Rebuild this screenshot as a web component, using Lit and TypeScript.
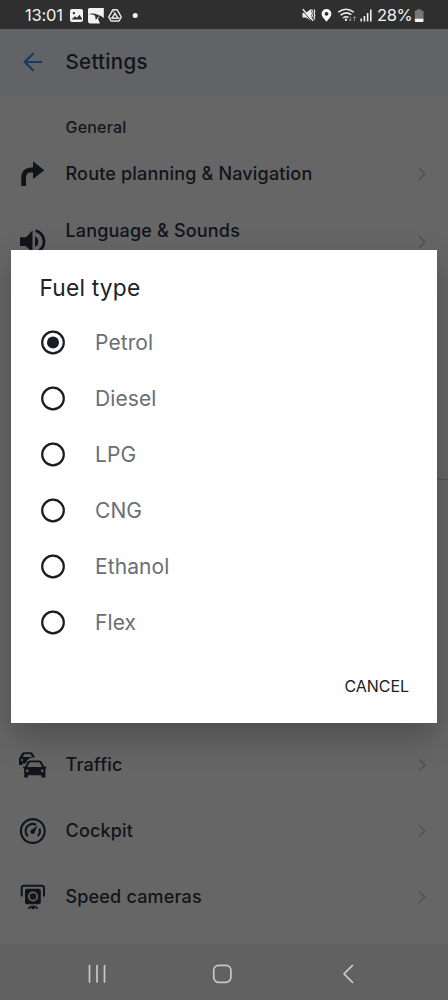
import { LitElement, html, css, svg } from "lit";
import { customElement, property } from "lit/decorators.js";

const icons: Record<string, unknown> = {
  route: svg`<path d="M3.2 27V19.5C3.2 12 7 8.6 13.5 8.6H15V2.2L26.4 11.2L15 20V13.6H13C9.5 13.6 8 15.5 8 19.5V27Z" fill="currentColor"/>`,
  sound: svg`<path d="M2 10.3H8L14.5 3.6V25.8L8 19H2Z" fill="currentColor"/><path d="M17 9.3Q20.3 11 20.3 14.7T17 20Z" fill="currentColor"/><path d="M17.6 3.6A11.3 11.3 0 0 1 17.6 25.5" fill="none" stroke="currentColor" stroke-width="2.8"/>`,
  traffic: svg`<path d="M1 15V8.3L3.8 3.7Q4.5 2.3 6 2.3H12.7Q14.2 2.3 15 3.7L17 7.3C13.5 7.3 10.7 8 9.2 10.6L7.7 13.4H4.5V15Z" fill="currentColor"/><path d="M4.8 6.9H14.2L12.7 4.4Q12.4 4 11.9 4H6.8Q6.3 4 6 4.4Z" fill="#646464"/><circle cx="4" cy="10" r="1.1" fill="#646464"/><path d="M6.2 27.5V19L5.2 17.8V16.5H7.2L9.3 12.2Q10.2 10.4 12 10.4H21.3Q23.1 10.4 24 12.2L26.1 16.5H28.2V17.8L27.4 19V27.5H23.5V25.2H10V27.5Z" fill="currentColor"/><path d="M9.3 16.9H24L22 13Q21.6 12.2 20.8 12.2H12.5Q11.7 12.2 11.3 13Z" fill="#646464"/><circle cx="9.3" cy="20.8" r="1.4" fill="#646464"/><circle cx="24.2" cy="20.8" r="1.4" fill="#646464"/>`,
  cockpit: svg`<g fill="none" stroke="currentColor" stroke-width="2.1"><circle cx="14.8" cy="15" r="11.9"/><path d="M9.9 20.1A7 7 0 0 1 18 8.8M21.4 12.5A7 7 0 0 1 19.7 20.1"/></g><circle cx="14.6" cy="15.7" r="2.2" fill="currentColor"/><path d="M13.1 14.5L19.7 9.3L16.3 17Z" fill="currentColor"/>`,
  camera: svg`<path d="M3.7 14.5V6Q3.7 3.8 6 3.8H23.7Q26 3.8 26 6V14.5" fill="none" stroke="currentColor" stroke-width="2"/><rect x="7" y="6.8" width="15.8" height="15.4" rx="2" fill="currentColor"/><circle cx="15" cy="14.5" r="4.2" fill="none" stroke="#646464" stroke-width="1.8"/><path d="M10.5 27Q11.5 24.6 13.6 24.6H16.5Q18.6 24.6 19.6 27M14 27L15 25L16.2 27" fill="none" stroke="currentColor" stroke-width="1.6"/>`,
};

@customElement("settings-row")
class SettingsRow extends LitElement {
  @property() icon = "";
  @property() label = "";
  @property({ type: Boolean }) detailed = false;
  static styles = css`
    :host { display: grid; grid-template-columns: 65.5px 1fr auto; align-items: center; height: 66px; flex: none; color: #11141b; }
    .icon { width: 30px; height: 30px; margin-left: 18px; display: block; }
    .label { font-size: 18px; font-weight: 500; line-height: 24px; letter-spacing: 0.18px; white-space: nowrap; }
    .detail { height: 22px; }
    .chevron { width: 10px; height: 14px; margin-right: 21px; display: block; }
  `;
  render() {
    return html`
      <svg class="icon" viewBox="0 0 30 30">${icons[this.icon]}</svg>
      <div><div class="label">${this.label}</div>${this.detailed ? html`<div class="detail"></div>` : ""}</div>
      <svg class="chevron" viewBox="0 0 10 14" fill="none" stroke="#505154" stroke-width="1.6"><path d="M2 1.2L7.8 7L2 12.8"/></svg>`;
  }
}

@customElement("fuel-option")
class FuelOption extends LitElement {
  @property() label = "";
  @property({ type: Boolean }) checked = false;
  static styles = css`
    :host { display: flex; align-items: center; height: 56px; gap: 29px; padding-left: 1px; font-size: 21px; letter-spacing: 0.1px; color: #6a6e77; }
    .radio { width: 26px; height: 26px; }
  `;
  render() {
    return html`<svg class="radio" viewBox="0 0 26 26"><circle cx="13" cy="12.5" r="10.8" fill="none" stroke="#191b27" stroke-width="2.2"/>${this.checked ? svg`<circle cx="13" cy="12.5" r="6" fill="#191b27"/>` : ""}</svg><span>${this.label}</span>`;
  }
}

@customElement("app-root")
class AppRoot extends LitElement {
  static styles = css`
    :host { display: block; position: relative; width: 448px; height: 1000px; overflow: hidden; background: #666; font-family: Inter, sans-serif; }
    .screen { display: flex; flex-direction: column; height: 1000px; }
    .status { height: 29px; background: #2f2f2f; color: #f2f2f2; display: flex; align-items: center; justify-content: space-between; font-size: 16.5px; box-sizing: border-box; padding: 0 23px 0 25px; flex: none; }
    .group { display: flex; align-items: center; height: 28px; }
    .clock { width: 43px; letter-spacing: -0.2px; white-space: nowrap; }
    .symbols { display: block; }
    .percent { width: 36px; letter-spacing: -0.4px; white-space: nowrap; }
    .bar { height: 66px; flex: none; background: #626367; display: flex; align-items: center; color: #11141b; }
    .back { width: 22px; height: 22px; margin-left: 22px; margin-right: 21.5px; }
    .title { font-size: 20.5px; font-weight: 500; letter-spacing: 0.3px; padding-bottom: 2px; }
    .section { height: 46px; flex: none; padding: 20px 0 0 65.5px; box-sizing: border-box; font-size: 16px; line-height: 25px; font-weight: 500; letter-spacing: 0.2px; color: #15171d; }
    .list { flex: 1; display: flex; flex-direction: column; min-height: 0; }
    .tall { height: 70px; }
    .covered { height: 455px; flex: none; box-sizing: border-box; padding: 202px 0 0 65px; }
    .divider { height: 1px; background: #555; }
    .nav { height: 56px; flex: none; background: #616161; }
    .dialog { position: absolute; left: 11px; top: 249.5px; width: 426px; height: 473.5px; box-sizing: border-box; background: #fff; padding: 24px 28px 0; display: flex; flex-direction: column; box-shadow: 0 14px 32px rgba(0, 0, 0, 0.24); }
    .heading { font-size: 22.75px; line-height: 28px; letter-spacing: 0.2px; color: #20222a; padding-bottom: 13px; padding-left: 0.5px; }
    .cancel { align-self: flex-end; margin-top: 23px; font-size: 16px; line-height: 24px; letter-spacing: -0.05px; color: #202127; }
  `;
  render() {
    return html`
      <div class="screen">
        <div class="status">
          <div class="group">
            <span class="clock">13:01</span>
            <svg class="symbols" width="72" height="28" viewBox="68 0 72 28">
              <rect x="70" y="8" width="13" height="13" rx="2" fill="#f2f2f2"/><circle cx="73.9" cy="12.1" r="1.2" fill="#2f2f2f"/><path d="M71.5 18.5L75 15.3L77 16.8L79.5 13.7L82 17.5V18.5Z" fill="#2f2f2f"/>
              <path d="M89.5 7H103.8V17L100 14.5L98 18L100 22.5H90Q88 22.5 88 20V9Q88 7 89.5 7Z" fill="#f2f2f2"/><path d="M88 13.5Q95 10.5 103.8 17.5L98.7 15.6L95.8 19L95 14.6Q91 12.9 88 13.5Z" fill="#2f2f2f"/>
              <g fill="none" stroke="#e8e8e8" stroke-linejoin="round"><path d="M112.8 8.8H117.2L121.3 16L119 20H111L108.7 16Z" stroke-width="1.5"/><path d="M115 12.3L118 17.2H112Z" stroke-width="1.4"/><path d="M113 9.5L115 12.5M120.5 17H118M109.5 17H112" stroke-width=".8"/></g>
              <circle cx="135.2" cy="14.6" r="2.5" fill="#f2f2f2"/>
            </svg>
          </div>
          <div class="group">
            <svg class="symbols" width="76" height="28" viewBox="301 0 76 28" fill="none" stroke="#ededed">
              <path d="M302.5 11.8H306L311 8V19.5L306 16.5H302.5Z" fill="#ededed" stroke="none"/><path d="M302.5 9.7L312 20.5" stroke="#2f2f2f" stroke-width="1"/><path d="M302.8 8.3L313.3 19.8" stroke-width="1.4"/><path d="M311.6 8.5L312.4 10.5L311.6 12.5L312.4 14.5L311.6 16.5M314 8.5L314.8 10.5L314 12.5L314.8 14.5L314 16.5L314.8 18.5" stroke-width="1.2"/>
              <path d="M326.5 20.8C324 17.7 321.6 15.5 321.6 13A4.9 4.9 0 0 1 331.4 13C331.4 15.5 329 17.7 326.5 20.8Z" fill="#fafafa" stroke="none"/><circle cx="326.5" cy="12.8" r="1.9" fill="#2f2f2f" stroke="none"/>
              <path d="M338.3 11.2Q346 5.2 353.7 11.2M340.6 14.2Q346 9.8 351.4 13.7M343 17Q346 14.7 348.5 16.4" stroke-width="1.5"/><circle cx="346" cy="18.8" r="1.2" fill="#ededed" stroke="none"/><path d="M350.3 15.5V20M348.8 18.5L350.3 20L351.8 18.5M354.5 20V15.5M353 17L354.5 15.5L356 17" stroke="#888" stroke-width="1"/>
              <path d="M361.2 20.5V17.5M364.4 20.5V15M367.6 20.5V12M370.8 20.5V8.5" stroke-width="1.6"/>
            </svg>
            <span class="percent">28%</span>
            <svg class="symbols" width="12" height="28" viewBox="413 0 12 28"><path d="M417 8.2H421V9.5H422.5Q423.5 9.5 423.5 10.5V18H414.8V10.5Q414.8 9.5 415.8 9.5H417Z" fill="#777"/><path d="M414.8 17.8H423.5V20Q423.5 21 422.5 21H415.8Q414.8 21 414.8 20Z" fill="#f5f5f5"/></svg>
          </div>
        </div>
        <div class="bar">
          <svg class="back" viewBox="0 0 22 22" fill="none" stroke="#123b68" stroke-width="2.2" stroke-linecap="round" stroke-linejoin="round"><path d="M19.2 11H2.7M11 2.7L2.7 11L11 19.3"/></svg>
          <span class="title">Settings</span>
        </div>
        <div class="list">
          <div class="section">General</div>
          <settings-row icon="route" label="Route planning &amp; Navigation"></settings-row>
          <settings-row class="tall" icon="sound" label="Language &amp; Sounds" detailed></settings-row>
          <div class="covered"><div class="divider"></div></div>
          <settings-row icon="traffic" label="Traffic"></settings-row>
          <settings-row icon="cockpit" label="Cockpit"></settings-row>
          <settings-row icon="camera" label="Speed cameras"></settings-row>
        </div>
        <svg class="nav" width="448" height="56" viewBox="0 944 448 56" fill="none" stroke="#c8c8c8" stroke-width="1.7" stroke-linecap="round"><path d="M89.5 965.5V982M97 965.5V982M104.5 965.5V982"/><rect x="213.7" y="965.3" width="17.2" height="17" rx="5"/><path d="M352.5 965.3L344 973.8L352.5 982.3" stroke-linejoin="round"/></svg>
      </div>
      <div class="dialog">
        <div class="heading">Fuel type</div>
        ${["Petrol", "Diesel", "LPG", "CNG", "Ethanol", "Flex"].map((name, i) => html`<fuel-option label=${name} ?checked=${i === 0}></fuel-option>`)}
        <div class="cancel">CANCEL</div>
      </div>`;
  }
}
